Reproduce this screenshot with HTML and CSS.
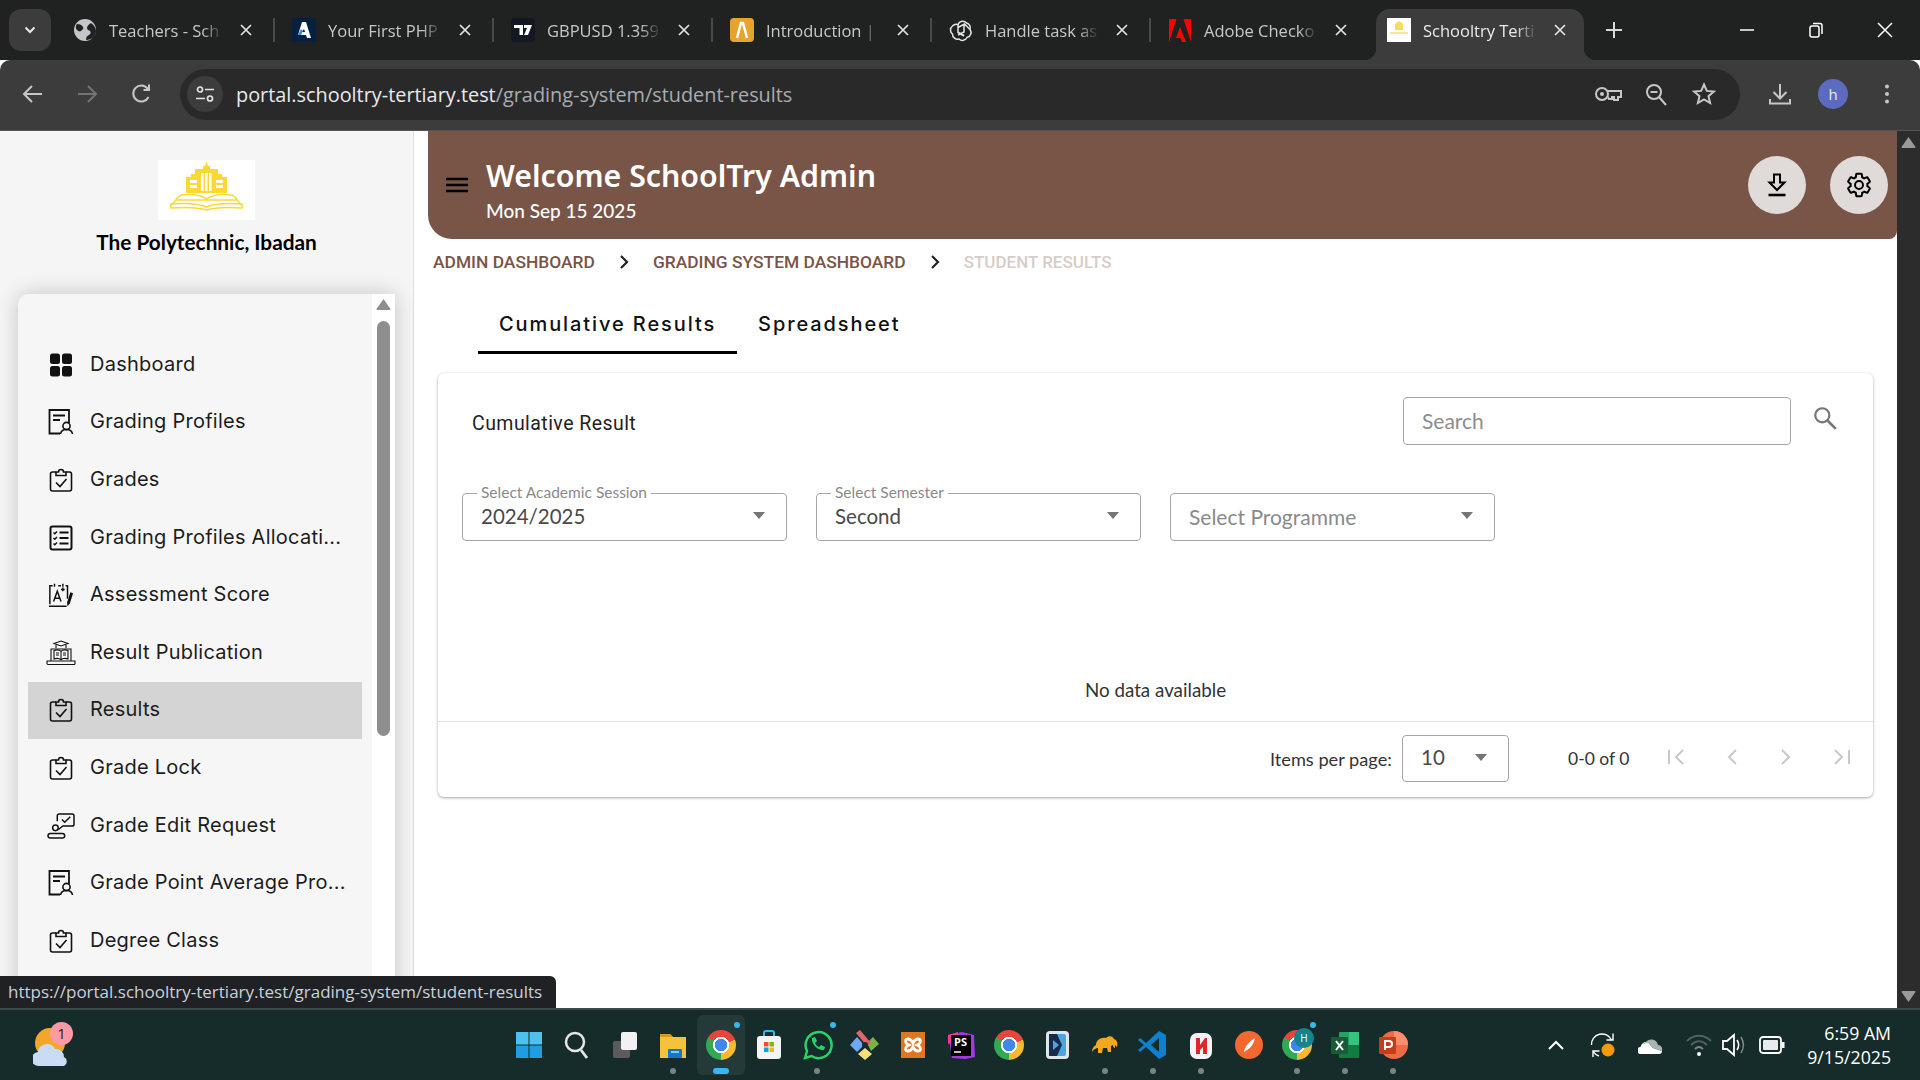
FILE: index.html
```html
<!DOCTYPE html>
<html lang="en">
<head>
    <meta charset="UTF-8">
    <meta name="viewport" content="width=device-width, initial-scale=1.0">
    <title>Schooltry Tertiary</title>
    <link rel="stylesheet" href="styles.css">
</head>
<body>
    <svg class="defs" width="0" height="0">
        <symbol id="i-clip" viewBox="0 0 26 26">
            <path d="M8 5H4.500A2 2 0 0 0 2.500 7v15a2 2 0 0 0 2 2h17a2 2 0 0 0 2-2V7a2 2 0 0 0-2-2H18" fill="none" stroke="currentColor" stroke-width="1.600"/>
            <path d="M8 8.500V5h2.500a2.500 2.500 0 0 1 5 0H18v3.500zM8 8.500h10" fill="none" stroke="currentColor" stroke-width="1.600"/>
            <path d="M8 15.500l4 4 6.500-7.500" fill="none" stroke="currentColor" stroke-width="1.600"/>
        </symbol>
        <symbol id="i-profile" viewBox="0 0 26 26">
            <path d="M12 24.500H1.500V1h19.500v13" fill="none" stroke="currentColor" stroke-width="1.800"/>
            <path d="M5 6.500h12M5 11h7" fill="none" stroke="currentColor" stroke-width="1.800"/>
            <circle cx="18.500" cy="17" r="3.600" fill="none" stroke="currentColor" stroke-width="1.600"/>
            <path d="M12.500 25c.5-3.500 3-4.500 6-4.500s5.500 1 6 4.500" fill="none" stroke="currentColor" stroke-width="1.600"/>
        </symbol>
        <symbol id="i-close" viewBox="0 0 14 14">
            <path d="M2 2l10 10M12 2L2 12" fill="none" stroke="currentColor" stroke-width="1.700"/>
        </symbol>
    </svg>

    <div class="tabstrip">
        <div class="tab-search">
            <svg width="12" height="8" viewBox="0 0 12 8"><path d="M1.500 1.500L6 6l4.500-4.500" fill="none" stroke="#e8eaed" stroke-width="2"/></svg>
        </div>
        <div class="tab">
            <svg class="favicon" viewBox="0 0 24 24"><circle cx="12" cy="12" r="11" fill="#c3c6c9"/><path d="M4 6c3 0 5 1 6 3s-1 3-2 4-3 0-4-1-2-3 0-6zM13 22c0-3 1-4 3-5s2-3 1-4-3-1-3-3 2-4 4-5c3 2 5 5 5 8 0 5-4 9-10 9z" fill="#202221"/></svg>
            <span class="tab-title">Teachers - Sch</span>
            <svg class="tab-close"><use href="#i-close"/></svg>
        </div>
        <div class="tab">
            <svg class="favicon" viewBox="0 0 24 24"><rect width="24" height="24" fill="#06213f"/><path d="M10 4h4l5 16h-4l-3-9-2 3h3l1 3H6z" fill="#fff"/><path d="M6 17l3-6 2 2-2 4z" fill="#3b82f6"/></svg>
            <span class="tab-title">Your First PHP</span>
            <svg class="tab-close"><use href="#i-close"/></svg>
        </div>
        <div class="tab">
            <svg class="favicon" viewBox="0 0 24 24"><rect width="24" height="24" rx="4" fill="#131722"/><path d="M3 7h9v10H8.500v-7H3zM13 7h8l-4 10h-4l3-7h-3z" fill="#fff"/></svg>
            <span class="tab-title">GBPUSD 1.359</span>
            <svg class="tab-close"><use href="#i-close"/></svg>
        </div>
        <div class="tab">
            <svg class="favicon" viewBox="0 0 24 24"><rect width="24" height="24" rx="4" fill="#e5a42d"/><path d="M7 20l4-15h2l4 15" fill="none" stroke="#fff" stroke-width="2.500"/></svg>
            <span class="tab-title">Introduction |</span>
            <svg class="tab-close"><use href="#i-close"/></svg>
        </div>
        <div class="tab">
            <svg class="favicon" viewBox="0 0 24 24"><g fill="none" stroke="#e3e3e3" stroke-width="1.500"><path d="M9 6.500a5 5 0 0 1 8.500-1.500 5 5 0 0 1 3.500 6.500 5 5 0 0 1-3 8 5 5 0 0 1-8 1.500 5 5 0 0 1-6.500-5 5 5 0 0 1 0-8 5 5 0 0 1 5.500-1.500z"/><path d="M9 6.500v8l6 3.500M15 17.500l-5.500-3M9 9.500l6.500-3.500 5.500 5.500M15 6v8l-6 3"/></g></svg>
            <span class="tab-title">Handle task as</span>
            <svg class="tab-close"><use href="#i-close"/></svg>
        </div>
        <div class="tab">
            <svg class="favicon" viewBox="0 0 24 24"><path d="M8.500 1H1v23zM15.500 1H23v23zM12 9l6 15h-4l-1.500-4H8z" fill="#f00"/></svg>
            <span class="tab-title">Adobe Checko</span>
            <svg class="tab-close"><use href="#i-close"/></svg>
        </div>
        <div class="tab active">
            <svg class="favicon" viewBox="0 0 24 24"><rect width="24" height="24" fill="#fff"/><path d="M8 12V6l4-3 4 3v6z" fill="#f5dc5a"/><path d="M3 16h18v-2H3z" fill="#f7e99a"/></svg>
            <span class="tab-title">Schooltry Terti</span>
            <svg class="tab-close"><use href="#i-close"/></svg>
        </div>
        <svg class="new-tab" width="20" height="20" viewBox="0 0 20 20"><path d="M10 2v16M2 10h16" stroke="#d8d9da" stroke-width="2"/></svg>
        <div class="window-btns">
            <span class="window-btn"><svg width="16" height="16" viewBox="0 0 16 16"><path d="M1 8h14" stroke="#fff" stroke-width="1.500"/></svg></span>
            <span class="window-btn"><svg width="16" height="16" viewBox="0 0 16 16"><rect x="2" y="4" width="9" height="11" rx="2" fill="none" stroke="#fff" stroke-width="1.500"/><path d="M5 1.500h7a2 2 0 0 1 2 2V12" fill="none" stroke="#fff" stroke-width="1.500"/></svg></span>
            <span class="window-btn"><svg width="16" height="16" viewBox="0 0 16 16"><path d="M1 1l14 14M15 1L1 15" stroke="#fff" stroke-width="1.500"/></svg></span>
        </div>
    </div>

    <div class="toolbar">
        <svg class="tool" viewBox="0 0 24 24"><path d="M21 12H4M11 4l-8 8 8 8" fill="none" stroke="#c7c7c7" stroke-width="2"/></svg>
        <svg class="tool" viewBox="0 0 24 24"><path d="M3 12h17M13 4l8 8-8 8" fill="none" stroke="#747474" stroke-width="2"/></svg>
        <svg class="tool" viewBox="0 0 24 24"><path d="M19.500 15a8 8 0 1 1-1-8.500L20 8M20 2.500V8h-5.500" fill="none" stroke="#c7c7c7" stroke-width="2"/></svg>
        <div class="omnibox">
            <span class="site-info">
                <svg width="20" height="20" viewBox="0 0 20 20"><g fill="none" stroke="#e3e3e3" stroke-width="1.700"><circle cx="5" cy="5.500" r="2.500"/><path d="M10 5.500h9M1 14.500h9"/><circle cx="15" cy="14.500" r="2.500"/></g></svg>
            </span>
            <span class="url"><span class="url-host">portal.schooltry-tertiary.test</span>/grading-system/student-results</span>
            <div class="omni-actions">
                <svg class="omni-icon omni-key" viewBox="0 0 28 24"><g fill="none" stroke="#c7c7c7" stroke-width="2"><circle cx="8" cy="12" r="6"/><path d="M14 9h13v6h-3v3h-4v-3h-2v2h-3l-1-2"/></g><circle cx="8" cy="12" r="2" fill="#c7c7c7"/></svg>
                <svg class="omni-icon" viewBox="0 0 24 24"><g fill="none" stroke="#c7c7c7" stroke-width="2"><circle cx="10" cy="10" r="7"/><path d="M15 15l7 8M6.500 10h7"/></g></svg>
                <svg class="omni-icon" viewBox="0 0 24 24"><path d="M12 2.500l2.800 6.400 7 .7-5.300 4.600 1.600 6.800-6.100-3.600-6.100 3.600 1.600-6.800-5.300-4.600 7-.7z" fill="none" stroke="#c7c7c7" stroke-width="2"/></svg>
            </div>
        </div>
        <svg class="tool tool-dl" viewBox="0 0 24 24"><path d="M12 2v14M5.500 10l6.500 6.500 6.500-6.500M2 17v4.500h20V17" fill="none" stroke="#c7c7c7" stroke-width="2"/></svg>
        <span class="avatar">h</span>
        <svg class="tool tool-menu" viewBox="0 0 24 24"><g fill="#c7c7c7"><circle cx="12" cy="4.500" r="2"/><circle cx="12" cy="12" r="2"/><circle cx="12" cy="19.500" r="2"/></g></svg>
    </div>

    <div class="viewport">
        <aside class="sidebar">
            <div class="brand">
                <div class="brand-logo">
                    <svg width="97" height="60" viewBox="0 0 97 60">
                        <path d="M48.500 1l1.500 5h2v3h8v5h4v3h5v16H28V17h5v-3h4V9h8V6h2z" fill="#fdd835"/>
                        <g fill="#fff"><rect x="43" y="13" width="2.500" height="18"/><rect x="47" y="13" width="2.500" height="18"/><rect x="51" y="13" width="2.500" height="18"/><rect x="32" y="20" width="7" height="3"/><rect x="32" y="25" width="7" height="3"/><rect x="58" y="20" width="7" height="3"/><rect x="58" y="25" width="7" height="3"/></g>
                        <path d="M18 39l5-4c10-1 20 0 25.500 4C54 35 64 34 74 35l5 4-1 1H19zM12 47l6-7M85 47l-6-7" fill="none" stroke="#fdd835" stroke-width="1.500"/>
                        <path d="M12 44c14-1 28-1 36.500 3C57 43 71 43 85 44M12 48c14-1 28-1 36.500 2C57 47 71 47 85 48" fill="none" stroke="#fdd835" stroke-width="1.500"/>
                    </svg>
                </div>
                <div class="brand-name">The Polytechnic, Ibadan</div>
            </div>
            <div class="menu-card">
                <nav class="menu">
                    <a class="menu-item"><svg class="menu-icon" viewBox="0 0 26 26"><g fill="#111"><rect x="2" y="1.500" width="10" height="10.500" rx="2.500"/><rect x="14" y="1.500" width="10" height="10.500" rx="2.500"/><rect x="2" y="14" width="10" height="10.500" rx="2.500"/><rect x="14" y="14" width="10" height="10.500" rx="2.500"/></g></svg><span>Dashboard</span></a>
                    <a class="menu-item"><svg class="menu-icon"><use href="#i-profile"/></svg><span>Grading Profiles</span></a>
                    <a class="menu-item"><svg class="menu-icon"><use href="#i-clip"/></svg><span>Grades</span></a>
                    <a class="menu-item"><svg class="menu-icon" viewBox="0 0 26 26"><g fill="none" stroke="currentColor"><rect x="2.500" y="1.500" width="21" height="23" rx="2" stroke-width="2"/><path d="M11.500 7.500h9M11.500 13h9M11.500 18.500h9" stroke-width="2"/><path d="M5.500 7.500l1.300 1.300L9 6.500M5.500 13l1.300 1.300L9 12M5.500 18.500l1.300 1.300L9 17.500" stroke-width="1.500"/></g></svg><span>Grading Profiles Allocati...</span></a>
                    <a class="menu-item"><svg class="menu-icon menu-icon-wide" viewBox="0 0 30 28"><g fill="none" stroke="currentColor" stroke-width="1.600"><path d="M3 24V4h3M8 2v3M12 4h3M17 2v3M20 4h2v14M2 26h19"/><path d="M7 21l4-11 4 11M8.500 17.500h5M17 10V6M15 8h4"/></g><path d="M25 11l3 1.200-3.500 11-2.500 3-.5-3.800z" fill="currentColor"/></svg><span>Assessment Score</span></a>
                    <a class="menu-item"><svg class="menu-icon menu-icon-wide" viewBox="0 0 30 26"><g fill="none" stroke="currentColor" stroke-width="1.100"><path d="M15 1l7 2.500L15 6 8 3.500zM10 5v3M20 5v3M5 21V9h20v12M1 21h28v2.500a1 1 0 0 1-1 1H2a1 1 0 0 1-1-1z"/><path d="M8 10.500c3-1 5-1 7 .8 2-1.800 4-1.800 7-.8V19c-3-1-5-1-7 .8-2-1.800-4-1.800-7-.8zM15 11v8"/><path d="M10 13h3M10 15h3M17 13h3M17 15h3"/></g></svg><span>Result Publication</span></a>
                    <a class="menu-item active"><svg class="menu-icon"><use href="#i-clip"/></svg><span>Results</span></a>
                    <a class="menu-item"><svg class="menu-icon"><use href="#i-clip"/></svg><span>Grade Lock</span></a>
                    <a class="menu-item"><svg class="menu-icon menu-icon-wide" viewBox="0 0 30 28"><g fill="none" stroke="currentColor" stroke-width="1.600"><path d="M11 9V3a2 2 0 0 1 2-2h14a2 2 0 0 1 2 2v9a2 2 0 0 1-2 2H17l-5 4"/><path d="M16 7l3 3 6-6"/><circle cx="9" cy="16" r="3"/><rect x="1" y="22" width="18" height="5" rx="2.500"/></g></svg><span>Grade Edit Request</span></a>
                    <a class="menu-item"><svg class="menu-icon"><use href="#i-profile"/></svg><span>Grade Point Average Pro...</span></a>
                    <a class="menu-item"><svg class="menu-icon"><use href="#i-clip"/></svg><span>Degree Class</span></a>
                </nav>
                <div class="menu-scroll">
                    <svg width="15" height="11" viewBox="0 0 15 11"><path d="M7.500 0l7 10q.3 1-1 1H1.500q-1.300 0-1-1z" fill="#8e8e8e"/></svg>
                    <div class="menu-thumb"></div>
                </div>
            </div>
        </aside>

        <main class="content">
            <header class="page-head">
                <svg class="burger" width="22" height="16" viewBox="0 0 22 16"><path d="M0 2h22M0 8h22M0 14h22" stroke="#000" stroke-width="2.400"/></svg>
                <div class="welcome">
                    <h1>Welcome SchoolTry Admin</h1>
                    <p>Mon Sep 15 2025</p>
                </div>
                <div class="head-btns">
                    <button class="round-btn"><svg width="20" height="24" viewBox="0 0 20 24"><path d="M7 1.500h6v8h4.500L10 17 2.500 9.500H7z" fill="none" stroke="#000" stroke-width="2"/><path d="M1.500 22h17" stroke="#000" stroke-width="2.600"/></svg></button>
                    <button class="round-btn"><svg width="28" height="28" viewBox="0 0 24 24"><circle cx="12" cy="12" r="3.400" fill="none" stroke="#000" stroke-width="1.700"/><path d="M19.140 12.940c.04-.3.06-.61.06-.94 0-.32-.02-.64-.07-.94l2.030-1.580c.18-.14.23-.41.12-.61l-1.920-3.320c-.12-.22-.37-.29-.59-.22l-2.390.96c-.5-.38-1.030-.7-1.620-.94l-.36-2.540c-.04-.24-.24-.41-.48-.41h-3.840c-.24 0-.43.17-.47.41l-.36 2.540c-.59.24-1.130.57-1.620.94l-2.390-.96c-.22-.08-.47 0-.59.22L2.740 8.870c-.12.21-.08.47.12.61l2.030 1.580c-.05.3-.09.63-.09.94s.02.64.07.94l-2.030 1.580c-.18.14-.23.41-.12.61l1.920 3.320c.12.22.37.29.59.22l2.390-.96c.5.38 1.030.7 1.620.94l.36 2.540c.05.24.24.41.48.41h3.840c.24 0 .44-.17.47-.41l.36-2.540c.59-.24 1.130-.56 1.620-.94l2.390.96c.22.08.47 0 .59-.22l1.920-3.320c.12-.22.07-.47-.12-.61z" fill="none" stroke="#000" stroke-width="1.700"/></svg></button>
                </div>
            </header>

            <div class="crumbs">
                <span>ADMIN DASHBOARD</span>
                <svg width="12" height="16" viewBox="0 0 12 16"><path d="M3 2l6 6-6 6" fill="none" stroke="#222" stroke-width="2.200"/></svg>
                <span>GRADING SYSTEM DASHBOARD</span>
                <svg width="12" height="16" viewBox="0 0 12 16"><path d="M3 2l6 6-6 6" fill="none" stroke="#222" stroke-width="2.200"/></svg>
                <span class="crumb-current">STUDENT RESULTS</span>
            </div>

            <div class="tabs">
                <div class="page-tab selected">Cumulative Results</div>
                <div class="page-tab">Spreadsheet</div>
            </div>

            <section class="card">
                <div class="card-top">
                    <div class="card-title">Cumulative Result</div>
                    <div class="search-box">Search</div>
                    <svg class="search-icon" width="24" height="24" viewBox="0 0 24 24"><circle cx="9.500" cy="9.500" r="6.500" fill="none" stroke="#757575" stroke-width="2"/><path d="M14.500 14.500L22 22" stroke="#757575" stroke-width="2.400"/></svg>
                </div>
                <div class="filters">
                    <div class="select">
                        <span class="select-label">Select Academic Session</span>
                        <span class="select-value">2024/2025</span>
                        <i class="caret"></i>
                    </div>
                    <div class="select">
                        <span class="select-label">Select Semester</span>
                        <span class="select-value">Second</span>
                        <i class="caret"></i>
                    </div>
                    <div class="select">
                        <span class="select-value placeholder">Select Programme</span>
                        <i class="caret"></i>
                    </div>
                </div>
                <div class="no-data">No data available</div>
                <div class="pager">
                    <span class="pager-label">Items per page:</span>
                    <div class="select pager-select">
                        <span class="select-value">10</span>
                        <i class="caret"></i>
                    </div>
                    <span class="pager-range">0-0 of 0</span>
                    <div class="pager-nav">
                        <svg viewBox="0 0 24 24"><path d="M4 5v14M18 5l-7 7 7 7" fill="none" stroke="#c8c8c8" stroke-width="2"/></svg>
                        <svg viewBox="0 0 24 24"><path d="M16 5l-7 7 7 7" fill="none" stroke="#c8c8c8" stroke-width="2"/></svg>
                        <svg viewBox="0 0 24 24"><path d="M8 5l7 7-7 7" fill="none" stroke="#c8c8c8" stroke-width="2"/></svg>
                        <svg viewBox="0 0 24 24"><path d="M20 5v14M6 5l7 7-7 7" fill="none" stroke="#c8c8c8" stroke-width="2"/></svg>
                    </div>
                </div>
            </section>
        </main>

        <div class="page-scroll">
            <svg width="15" height="11" viewBox="0 0 15 11"><path d="M7.500 0l7 10q.3 1-1 1H1.500q-1.300 0-1-1z" fill="#9a9a9a"/></svg>
            <svg width="15" height="11" viewBox="0 0 15 11"><path d="M7.500 11l7-10q.3-1-1-1H1.500q-1.300 0-1 1z" fill="#9a9a9a"/></svg>
        </div>

        <div class="status-tip">https://portal.schooltry-tertiary.test/grading-system/student-results</div>
    </div>

    <footer class="taskbar">
        <div class="weather">
            <svg width="38" height="46" viewBox="0 0 38 46">
                <circle cx="17" cy="21" r="15" fill="#f2a62a"/>
                <path d="M6 44a7 7 0 0 1-1-14 9 9 0 0 1 17-3 8 8 0 0 1 9 8 5 5 0 0 1 0 9z" fill="#c9dcf5"/>
            </svg>
            <span class="weather-badge">1</span>
        </div>
        <div class="apps">
            <div class="app"><svg viewBox="0 0 32 32"><g fill="#4cc2f1"><rect x="3" y="3" width="12.500" height="12.500"/><rect x="16.500" y="3" width="12.500" height="12.500"/></g><g fill="#1f9de2"><rect x="3" y="16.500" width="12.500" height="12.500"/><rect x="16.500" y="16.500" width="12.500" height="12.500"/></g></svg></div>
            <div class="app"><svg viewBox="0 0 32 32"><circle cx="14" cy="13" r="9" fill="none" stroke="#e6e6e6" stroke-width="2.500"/><path d="M20 21l6 8" stroke="#e6e6e6" stroke-width="2.800"/></svg></div>
            <div class="app"><svg viewBox="0 0 32 32"><rect x="4" y="12" width="17" height="17" rx="2" fill="#5b5b5b"/><rect x="12" y="3" width="16" height="18" rx="2" fill="#f2f2f2"/></svg></div>
            <div class="app running"><svg viewBox="0 0 32 32"><path d="M3 5h10l3 3h13v21H3z" fill="#f5c33b"/><path d="M3 5h10l3 3H3z" fill="#d99a1c"/><rect x="11" y="20" width="14" height="9" rx="1" fill="#1576c4"/><rect x="14" y="22" width="8" height="2" fill="#7fd0f5"/></svg></div>
            <div class="app active"><span class="chrome-logo"></span><i class="app-badge"></i></div>
            <div class="app"><svg viewBox="0 0 32 32"><path d="M11 8V4a2 2 0 0 1 2-2h6a2 2 0 0 1 2 2v4" fill="none" stroke="#38b6f0" stroke-width="2"/><rect x="4" y="7" width="24" height="23" rx="3" fill="#f4f4f4"/><rect x="11" y="13" width="4.500" height="4.500" fill="#f25022"/><rect x="16.500" y="13" width="4.500" height="4.500" fill="#7fba00"/><rect x="11" y="18.500" width="4.500" height="4.500" fill="#00a4ef"/><rect x="16.500" y="18.500" width="4.500" height="4.500" fill="#ffb900"/></svg></div>
            <div class="app running"><svg viewBox="0 0 32 32"><path d="M4 29l2-7A13 13 0 1 1 10.500 27z" fill="#152c2a" stroke="#25d366" stroke-width="2.500"/><path d="M11 9l3-1 2 4-2 2c1 2 2 3 4 4l2-2 4 2-1 3c-6 1-13-6-12-12z" fill="#25d366"/></svg><i class="app-badge"></i></div>
            <div class="app"><svg viewBox="0 0 32 32"><path d="M8 8L1 16l7 7 7-7z" fill="#6fa8f5"/><path d="M24 8l-6 6 2 4 2 4 8-7z" fill="#7cb342"/><path d="M16 19l-7 6 7 6 7-6z" fill="#f5e07e"/><path d="M7 4l4-3 11 13-4 3z" fill="#e8616f"/><circle cx="16" cy="16" r="3" fill="#152c2a"/></svg></div>
            <div class="app"><svg viewBox="0 0 32 32"><rect x="4" y="3" width="24" height="26" fill="#e0761f"/><path d="M11 10c3 0 4 2 5 4 1-2 2-4 5-4s3 3 1 5l-2 1 2 1c2 2 2 5-1 5s-4-2-5-4c-1 2-2 4-5 4s-3-3-1-5l2-1-2-1c-2-2-2-5 1-5z" fill="none" stroke="#fff" stroke-width="2.800"/></svg></div>
            <div class="app"><svg viewBox="0 0 32 32"><path d="M3 6l14-3 12 3 1 22-10 2-13-1z" fill="#a23ae0"/><path d="M3 6l10-3v8l-10 4z" fill="#f0398f"/><rect x="6" y="6" width="20" height="21" fill="#000"/><path d="M9 23h7" stroke="#fff" stroke-width="1.500"/></svg><b class="ps-text">PS</b></div>
            <div class="app"><span class="chrome-logo"></span></div>
            <div class="app"><svg viewBox="0 0 32 32"><rect x="5" y="2" width="23" height="28" rx="4" fill="#dfe6ec"/><rect x="8" y="5" width="17" height="22" rx="2" fill="#4aa6e0"/><path d="M8 5h8l5 11-5 11H8z" fill="#1a2b4a"/><path d="M12 11l6 5-6 5z" fill="#4aa6e0"/></svg></div>
            <div class="app running"><svg viewBox="0 0 32 32"><path d="M3 23c0-4 2-6 4-7 0-5 5-8 10-7 3-3 7-2 8 1 3 1 4 4 3 8l-2-2v3c-1 0-2-1-2-3l-2 1v6h-3l-1-4h-4l-1 5H9v-5c-2 0-4 1-6 4z" fill="#f5a81f"/></svg></div>
            <div class="app running"><svg viewBox="0 0 32 32"><path d="M22 2l7 4v20l-7 4L9 18l-6 5-2-2 6-5-6-5 2-2 6 5z" fill="#0e7fd1"/><path d="M22 9l-8 7 8 7z" fill="#152c2a"/></svg></div>
            <div class="app running"><svg viewBox="0 0 32 32"><rect x="5" y="4" width="22" height="26" rx="7" fill="#f4f4f4"/><path d="M11 9h4v7l5-7h2v16h-4v-7l-3 3v4h-4z" fill="#e3242b"/></svg></div>
            <div class="app"><svg viewBox="0 0 32 32"><circle cx="16" cy="16" r="14" fill="#f4672f"/><path d="M11 22c2-6 6-10 11-13-1 5-4 10-8 12l-3 2z" fill="#fff"/></svg></div>
            <div class="app running"><span class="chrome-logo"></span><i class="profile-dot">H</i><i class="app-badge"></i></div>
            <div class="app running"><svg viewBox="0 0 32 32"><rect x="10" y="3" width="20" height="26" rx="1" fill="#21a366"/><rect x="20" y="3" width="10" height="13" fill="#33c481"/><rect x="10" y="16" width="20" height="13" fill="#107c41"/><rect x="2" y="8" width="17" height="17" rx="1" fill="#185c37"/><path d="M7 12l7 9M14 12l-7 9" stroke="#fff" stroke-width="2"/></svg></div>
            <div class="app running"><svg viewBox="0 0 32 32"><circle cx="17" cy="16" r="14" fill="#ed6c47"/><path d="M17 2a14 14 0 0 1 14 14H17z" fill="#ff8f6b"/><rect x="2" y="8" width="17" height="17" rx="1" fill="#c43e1c"/><path d="M8 21v-9h4a3 3 0 0 1 0 6H8" fill="none" stroke="#fff" stroke-width="2"/></svg></div>
        </div>
        <div class="tray">
            <svg class="tray-caret" width="18" height="12" viewBox="0 0 18 12"><path d="M2 10l7-7 7 7" fill="none" stroke="#fff" stroke-width="2"/></svg>
            <svg class="tray-sync" width="26" height="26" viewBox="0 0 26 26"><g fill="none" stroke="#fff" stroke-width="1.400"><path d="M1.500 13a10.500 10.500 0 0 1 20-5"/><path d="M23 1.500V8h-6.500"/><path d="M3 25v-6h6.500"/><path d="M3 19a10.500 10.500 0 0 0 6 5"/></g><circle cx="18" cy="18" r="6.500" fill="#f59a00"/></svg>
            <svg class="tray-cloud" width="26" height="22" viewBox="0 0 26 22"><path d="M3 20a3.500 3.500 0 0 1-.5-7C4 8 8 7 10.500 9l4.500 5 9 3a3 3 0 0 1-2 3z" fill="#fff"/><path d="M10.500 9l4.500 5 9 3c1-3-1-6-4-6-1-6-9-8-13-2-1 0-2 .5-2.500 1.500 2-1 4-1 6-1.500z" fill="#a9b4b2"/></svg>
            <svg class="tray-wifi" width="26" height="26" viewBox="0 0 26 26"><g fill="none" stroke-width="1.800"><path d="M1 9c7-7 17-7 24 0" stroke="#52625f"/><path d="M5 13c5-5 11-5 16 0" stroke="#52625f"/><path d="M9 17c2.500-2.500 5.500-2.500 8 0" stroke="#7b8886"/></g><circle cx="13" cy="22" r="2" fill="#fff"/></svg>
            <svg class="tray-sound" width="26" height="26" viewBox="0 0 26 26"><path d="M2 9h4l7-6v20l-7-6H2z" fill="none" stroke="#fff" stroke-width="1.800"/><path d="M16 8c2 3 2 7 0 10" fill="none" stroke="#fff" stroke-width="1.500"/><path d="M20 5c3 5 3 11 0 16" fill="none" stroke="#7b8886" stroke-width="1.500"/></svg>
            <svg class="tray-battery" width="26" height="20" viewBox="0 0 26 20"><rect x="1" y="2" width="21" height="16" rx="3" fill="none" stroke="#fff" stroke-width="1.800"/><rect x="4" y="5" width="15" height="10" rx="1" fill="#eaeaea"/><rect x="23" y="7" width="2.500" height="6" fill="#fff"/></svg>
            <div class="clock">
                <div>6:59 AM</div>
                <div>9/15/2025</div>
            </div>
        </div>
    </footer>
</body>
</html>
```

FILE: styles.css
```css
* {
    box-sizing: border-box;
}
html, body {
    margin: 0;
    padding: 0;
}
body {
    width: 1920px;
    height: 1080px;
    overflow: hidden;
    display: flex;
    flex-direction: column;
    background: #fff;
    font-family: Lato, "Noto Sans", sans-serif;
    color: #222;
}
.defs {
    position: absolute;
}

/* browser tabs */
.tabstrip {
    height: 60px;
    flex: none;
    display: flex;
    align-items: center;
    background: #202221;
    font-family: "Open Sans", sans-serif;
}
.tab-search {
    width: 42px;
    height: 42px;
    margin-left: 9px;
    margin-right: 11px;
    border-radius: 12px;
    background: #3c3c3c;
    display: flex;
    align-items: center;
    justify-content: center;
}
.tab {
    position: relative;
    width: 213px;
    height: 24px;
    margin-right: 6px;
    padding-left: 11px;
    display: flex;
    align-items: center;
    border-right: 2px solid #4a4a4a;
    color: #c7c7c7;
    font-size: 16.500px;
}
.tab:nth-child(7) {
    border-right: none;
}
.favicon {
    width: 24px;
    height: 24px;
    flex: none;
}
.tab-title {
    width: 114px;
    margin-left: 12px;
    white-space: nowrap;
    -webkit-mask-image: linear-gradient(to right, #000 82%, transparent);
    mask-image: linear-gradient(to right, #000 82%, transparent);
}
.tab-close {
    width: 14px;
    height: 14px;
    margin-left: 16px;
    flex: none;
    color: #e3e3e3;
}
.tab.active {
    width: 208px;
    height: 51px;
    margin-right: 0;
    padding-bottom: 9px;
    align-self: flex-end;
    border-right: none;
    border-radius: 14px 14px 0 0;
    background: #3c3c3c;
    color: #e8eaed;
}
.tab.active::before, .tab.active::after {
    content: "";
    position: absolute;
    bottom: 0;
    width: 12px;
    height: 12px;
}
.tab.active::before {
    left: -12px;
    background: radial-gradient(circle at 0 0, transparent 12px, #3c3c3c 12.500px);
}
.tab.active::after {
    right: -12px;
    background: radial-gradient(circle at 100% 0, transparent 12px, #3c3c3c 12.500px);
}
.new-tab {
    margin-left: 20px;
}
.window-btns {
    margin-left: auto;
    padding-right: 1px;
    display: flex;
}
.window-btn {
    width: 69px;
    display: flex;
    justify-content: center;
}

/* address bar */
.toolbar {
    height: 71px;
    flex: none;
    display: flex;
    align-items: center;
    padding: 0 21px 2px 21px;
    background: #3c3c3c;
    border-radius: 10px 10px 0 0;
    border-bottom: 1px solid #555;
    font-family: "Open Sans", sans-serif;
}
.tool {
    width: 24px;
    height: 24px;
    flex: none;
    margin-right: 30px;
}
.tool:nth-child(3) {
    margin-right: 27px;
}
.omnibox {
    width: 1560px;
    height: 51px;
    flex: none;
    display: flex;
    align-items: center;
    padding: 0 7px;
    border-radius: 26px;
    background: #292929;
}
.site-info {
    width: 36px;
    height: 36px;
    border-radius: 50%;
    background: #3c3c3c;
    display: flex;
    align-items: center;
    justify-content: center;
}
.url {
    margin-left: 13px;
    font-size: 19.870px;
    color: #a9acb0;
}
.url-host {
    color: #e8eaed;
}
.omni-actions {
    margin-left: auto;
    padding-right: 17px;
    display: flex;
    align-items: center;
    gap: 24px;
}
.omni-icon {
    width: 24px;
    height: 24px;
}
.omni-icon.omni-key {
    width: 28px;
    margin-right: -2px;
}
.tool-dl {
    margin-left: 28px;
    margin-right: 0;
}
.avatar {
    width: 30px;
    height: 30px;
    margin-left: 26px;
    border-radius: 50%;
    background: #5c6bc0;
    color: #e8eaed;
    font-size: 15px;
    text-align: center;
    line-height: 30px;
    flex: none;
}
.tool-menu {
    margin-left: 27px;
    margin-right: 0;
}

/* page area */
.viewport {
    position: relative;
    flex: 1;
    min-height: 0;
    display: flex;
    overflow: hidden;
}
.sidebar {
    width: 414px;
    flex: none;
    display: flex;
    flex-direction: column;
    background: #f5f5f5;
    border-right: 1px solid #dedede;
}
.brand {
    height: 163px;
    flex: none;
    display: flex;
    flex-direction: column;
    align-items: center;
    padding-top: 29px;
}
.brand-logo {
    width: 97px;
    height: 60px;
    background: #fff;
}
.brand-name {
    margin-top: 9px;
    font-size: 20.800px;
    font-weight: 700;
    color: #000;
}
.menu-card {
    flex: 1;
    min-height: 0;
    width: 377px;
    margin-left: 18px;
    display: flex;
    overflow: hidden;
    border-radius: 10px 0 0 0;
    background: #f6f6f6;
    box-shadow: 0 0 22px rgba(0, 0, 0, .2);
}
.menu {
    width: 354px;
    flex: none;
    padding: 42px 10px 0 10px;
}
.menu-item {
    height: 57.600px;
    padding-left: 20px;
    display: flex;
    align-items: center;
    font-family: Inter, sans-serif;
    font-size: 20px;
    letter-spacing: .25px;
    color: #1c1c1c;
}
.menu-item span {
    padding-bottom: 2px;
    white-space: nowrap;
}
.menu-item.active {
    background: #d4d4d4;
}
.menu-icon {
    width: 26px;
    height: 26px;
    margin-right: 16px;
    flex: none;
    color: #111;
}
.menu-icon.menu-icon-wide {
    width: 30px;
    margin-left: -2px;
    margin-right: 14px;
}
.menu-scroll {
    flex: 1;
    padding-top: 5px;
    background: #fff;
    display: flex;
    flex-direction: column;
    align-items: center;
}
.menu-thumb {
    width: 13px;
    height: 415px;
    margin-top: 11px;
    border-radius: 7px;
    background: #8e8e8e;
}
.content {
    flex: 1;
    min-width: 0;
    padding-left: 14px;
}
.page-head {
    height: 108px;
    display: flex;
    align-items: center;
    padding-right: 9px;
    background: #795548;
    border-radius: 0 0 8px 24px;
}
.burger {
    margin-left: 18px;
    flex: none;
}
.welcome {
    margin-left: 18px;
    padding-top: 9px;
    color: #fff;
}
.welcome h1 {
    margin: 0;
    font-family: "Noto Sans", sans-serif;
    font-size: 30.300px;
    font-weight: 600;
    line-height: 38px;
}
.welcome p {
    margin: 5px 0 0;
    font-size: 19px;
    font-weight: 500;
    line-height: 22px;
}
.head-btns {
    margin-left: auto;
    display: flex;
    gap: 24px;
}
.round-btn {
    width: 58px;
    height: 58px;
    padding: 0;
    border: none;
    border-radius: 50%;
    background: #e0dbd8;
    display: flex;
    align-items: center;
    justify-content: center;
}
.crumbs {
    height: 46px;
    padding-left: 5px;
    display: flex;
    align-items: center;
    gap: 23px;
    font-family: Roboto, sans-serif;
    font-size: 17.400px;
    font-weight: 500;
    color: #795548;
}
.crumb-current {
    font-size: 17px;
    color: #d7ccc8;
}
.tabs {
    height: 69px;
    margin-left: 50px;
    display: flex;
    font-family: Inter, sans-serif;
    font-size: 20px;
    font-weight: 500;
    letter-spacing: 1.900px;
    color: #111;
}
.page-tab {
    padding: 12px 21px 0;
    display: flex;
    align-items: center;
    height: 69px;
    border-bottom: 3px solid transparent;
}
.page-tab.selected {
    border-bottom-color: #000;
}
.card {
    width: 1435px;
    height: 424px;
    margin: 19px 0 0 10px;
    border-radius: 6px;
    background: #fff;
    box-shadow: 0 1px 3px rgba(0, 0, 0, .35), 0 0 1px rgba(0, 0, 0, .08);
    display: flex;
    flex-direction: column;
}
.card-top {
    height: 48px;
    margin-top: 24px;
    padding-left: 34px;
    display: flex;
    align-items: center;
}
.card-title {
    padding-top: 4px;
    font-family: Roboto, sans-serif;
    font-size: 19.500px;
    letter-spacing: .45px;
    color: #222;
}
.search-box {
    width: 388px;
    height: 48px;
    margin-left: auto;
    padding-left: 18px;
    border: 1px solid #a6a6a6;
    border-radius: 4px;
    font-size: 21px;
    color: #8d8d8d;
    line-height: 46px;
}
.search-icon {
    margin: -6px 35px 0 21px;
    width: 26px;
    height: 26px;
}
.filters {
    margin-top: 48px;
    padding-left: 24px;
    display: flex;
    gap: 29px;
}
.select {
    position: relative;
    width: 325px;
    height: 48px;
    padding-left: 18px;
    display: flex;
    align-items: center;
    border: 1px solid #a6a6a6;
    border-radius: 4px;
}
.select-label {
    position: absolute;
    top: -10px;
    left: 14px;
    padding: 0 4px;
    background: #fff;
    font-size: 15.500px;
    line-height: 16px;
    color: #8a8a8a;
}
.select-value {
    margin-top: -3px;
    font-size: 20.500px;
    color: #4a4a4a;
}
.select-value.placeholder {
    margin-top: -1px;
    font-size: 21px;
    color: #8a8a8a;
}
.caret {
    position: absolute;
    right: 21px;
    top: 18px;
    border-left: 6px solid transparent;
    border-right: 6px solid transparent;
    border-top: 7px solid #757575;
}
.no-data {
    height: 180px;
    padding-top: 137px;
    text-align: center;
    font-size: 18.800px;
    color: #333;
}
.pager {
    flex: 1;
    display: flex;
    align-items: center;
    padding: 0 0 2px 832px;
    border-top: 1px solid #e2e2e2;
}
.pager-label {
    width: 132px;
    font-size: 18.200px;
    color: #333;
}
.pager-select {
    width: 107px;
    height: 47px;
    padding-left: 18px;
}
.pager-range {
    margin-left: 59px;
    font-size: 17.500px;
    color: #333;
}
.pager-nav {
    margin-left: 36px;
    margin-top: -3px;
    display: flex;
    gap: 30.500px;
}
.pager-nav svg {
    width: 24px;
    height: 24px;
}
.page-scroll {
    width: 23px;
    flex: none;
    padding: 6px 0;
    background: #2c2c2c;
    display: flex;
    flex-direction: column;
    align-items: center;
    justify-content: space-between;
}
.status-tip {
    position: absolute;
    left: 0;
    bottom: 0;
    height: 32px;
    width: 556px;
    padding-left: 8px;
    border-radius: 0 6px 0 0;
    background: #202124;
    color: #c9d1d9;
    font-family: "Open Sans", sans-serif;
    font-size: 17px;
    line-height: 32px;
    white-space: nowrap;
}

/* windows taskbar */
.taskbar {
    height: 72px;
    flex: none;
    display: flex;
    align-items: center;
    background: #152c2a;
    border-top: 2px solid #3a4a48;
    font-family: "Open Sans", sans-serif;
}
.weather {
    position: relative;
    width: 40px;
    height: 46px;
    margin-left: 33px;
    flex: none;
}
.weather-badge {
    position: absolute;
    top: 0;
    left: 17px;
    width: 23px;
    height: 23px;
    border-radius: 50%;
    background: #ff9aa5;
    color: #222;
    font-size: 15px;
    text-align: center;
    line-height: 23px;
}
.apps {
    margin-left: 432px;
    display: flex;
}
.app {
    position: relative;
    width: 48px;
    height: 60px;
    display: flex;
    align-items: center;
    justify-content: center;
    flex: none;
}
.app > svg {
    width: 32px;
    height: 32px;
}
.app.running::after, .app.active::after {
    content: "";
    position: absolute;
    bottom: 1px;
    left: 21px;
    width: 6px;
    height: 6px;
    border-radius: 50%;
    background: #7a8583;
}
.app.active {
    border-radius: 6px;
    background: #233a38;
}
.app.active::after {
    left: 16px;
    width: 16px;
    border-radius: 3px;
    background: #38b6f0;
}
.app-badge {
    position: absolute;
    top: 7px;
    right: 5px;
    width: 6px;
    height: 6px;
    border-radius: 50%;
    background: #38b6f0;
}
.chrome-logo {
    width: 30px;
    height: 30px;
    border-radius: 50%;
    background:
        radial-gradient(circle, #3f87ee 0 6px, #fff 6.500px 8px, transparent 8.500px),
        conic-gradient(#e8453c 0 70deg, #f9bb2d 70deg 180deg, #34a853 180deg 300deg, #e8453c 300deg);
}
.ps-text {
    position: absolute;
    left: 17px;
    top: 19px;
    font-size: 11px;
    color: #fff;
}
.profile-dot {
    position: absolute;
    top: 13px;
    right: 7px;
    width: 20px;
    height: 20px;
    border-radius: 50%;
    background: #12838f;
    color: #fff;
    font-size: 10px;
    font-style: normal;
    text-align: center;
    line-height: 20px;
}
.tray {
    margin-left: auto;
    padding-right: 29px;
    display: flex;
    align-items: center;
}
.tray-caret {
    margin-right: 25px;
}
.tray-sync {
    margin-right: 22px;
}
.tray-cloud {
    margin-right: 22px;
}
.tray-wifi {
    margin-right: 9px;
}
.tray-sound {
    margin-right: 12px;
}
.tray-battery {
    margin-right: 22px;
}
.clock {
    text-align: right;
    color: #fff;
    font-size: 17.700px;
    line-height: 24px;
}
```
